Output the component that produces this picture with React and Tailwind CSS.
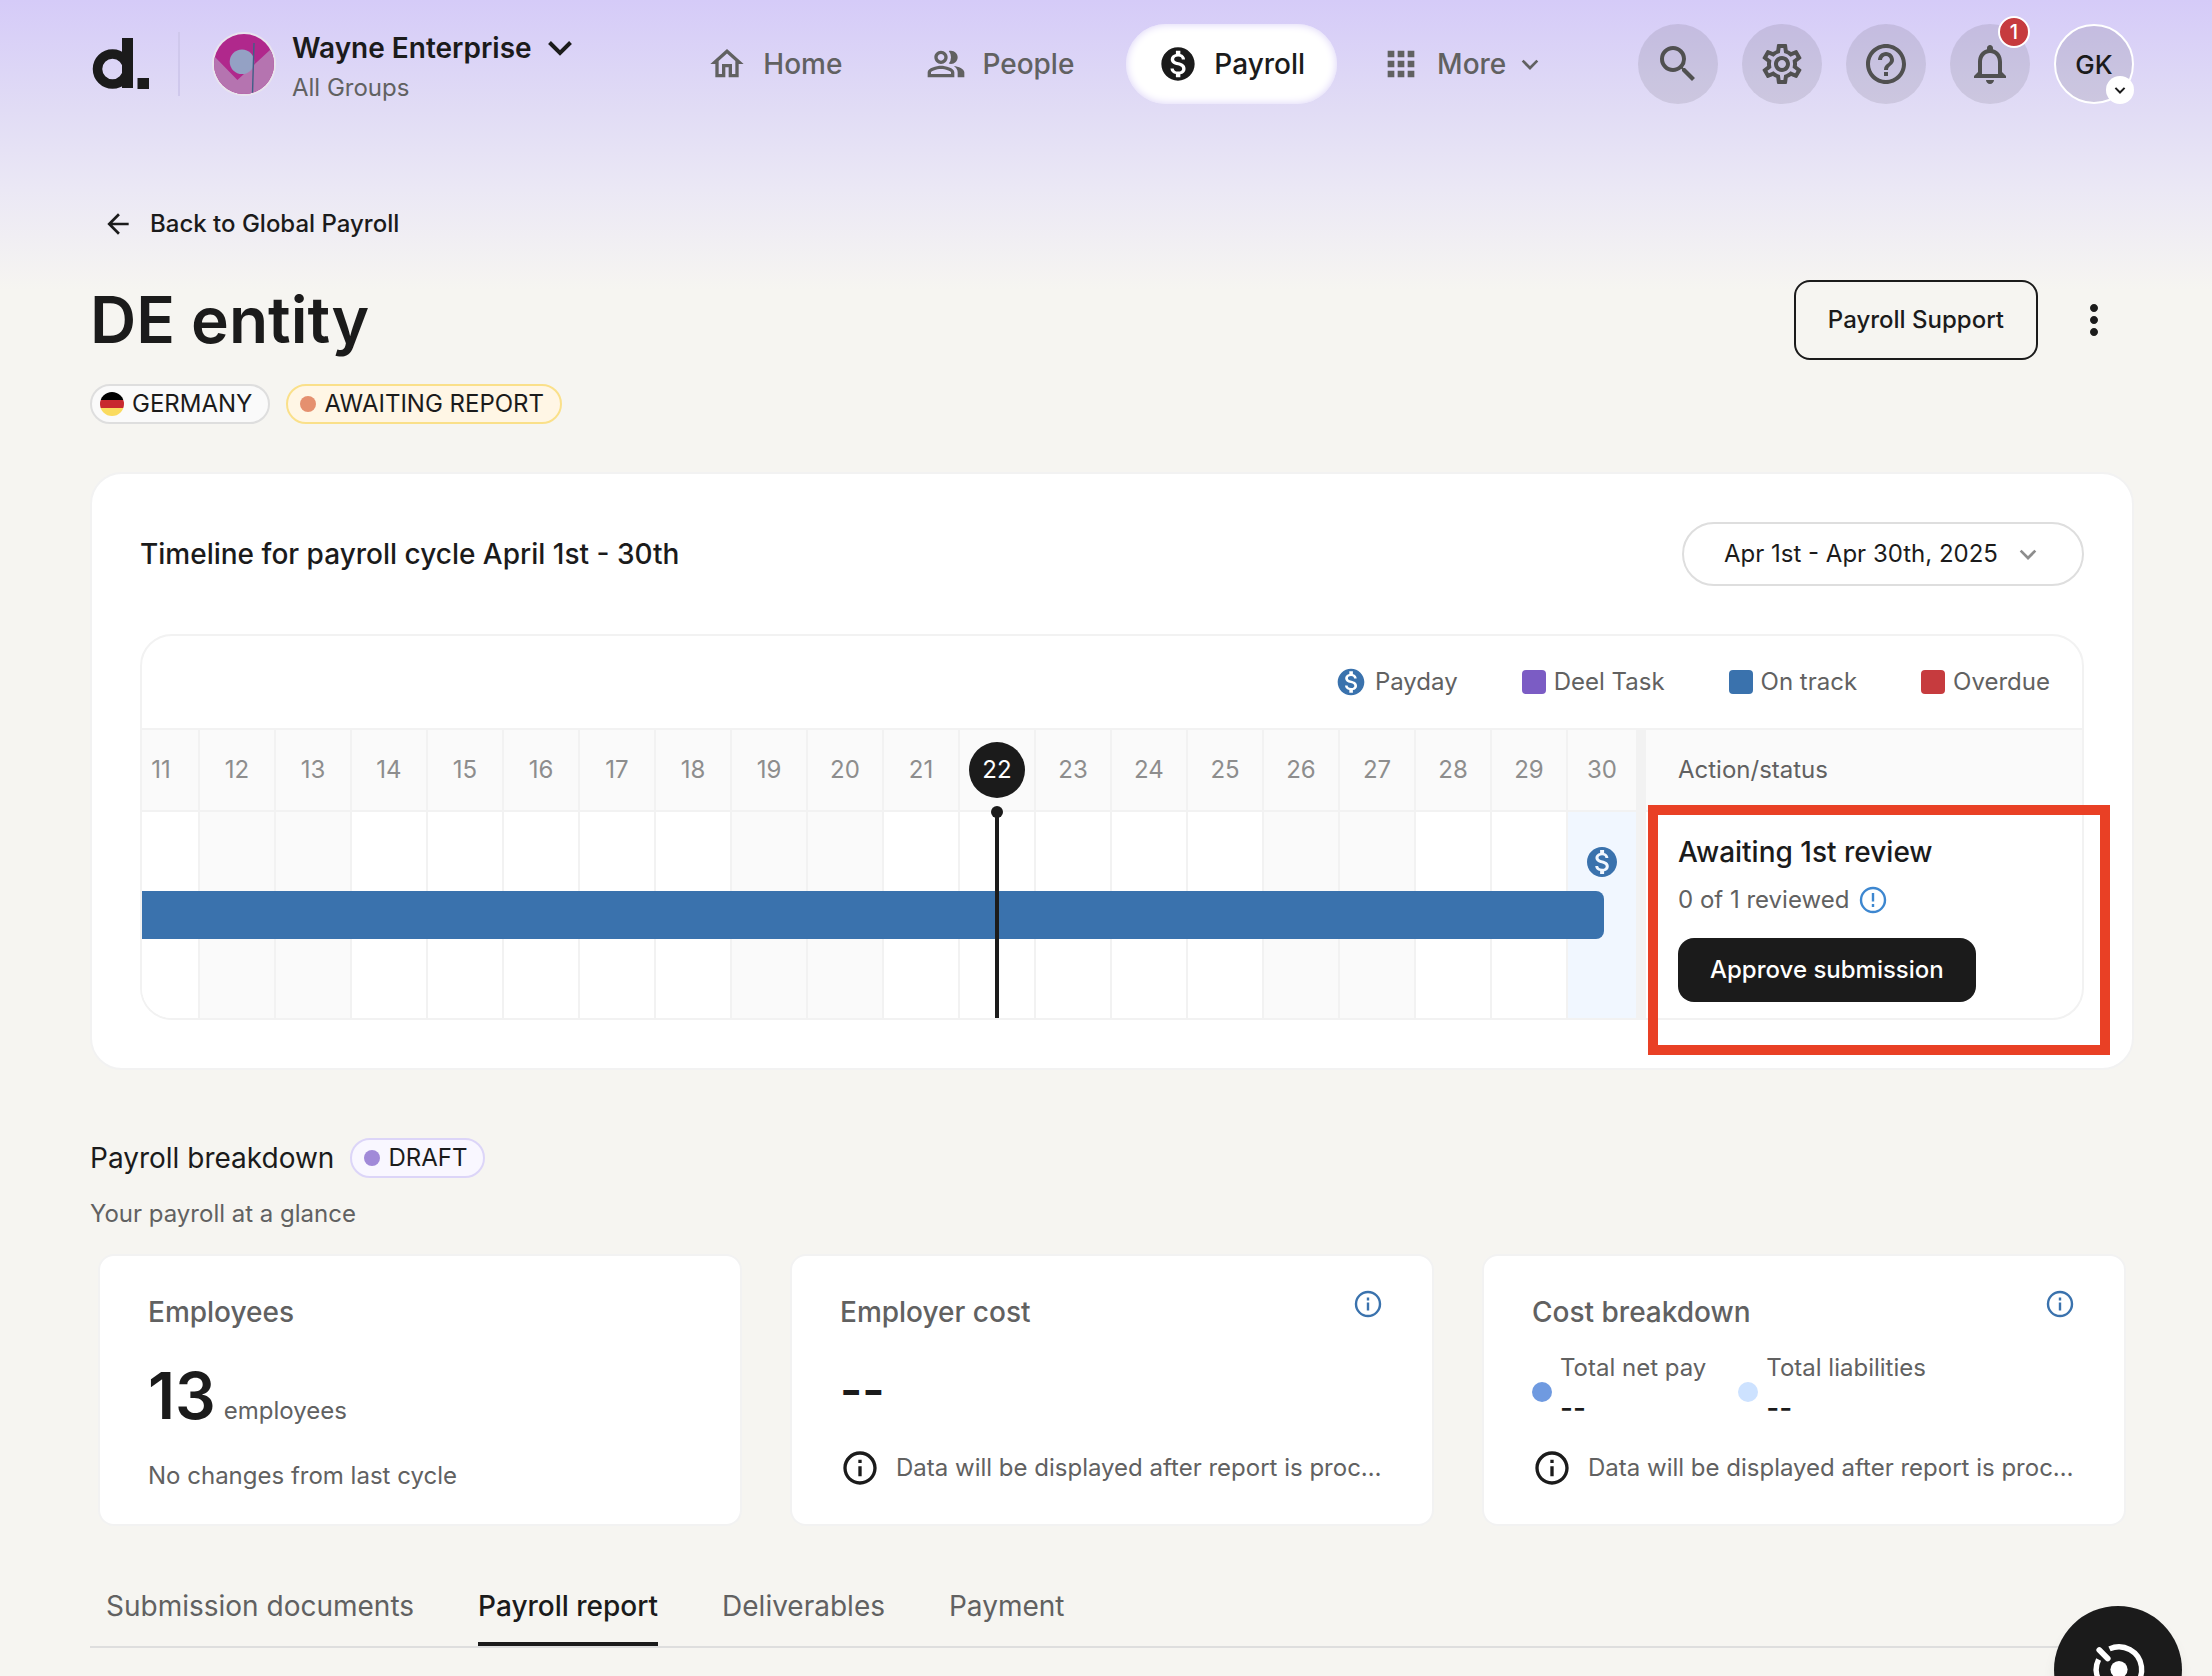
import React, { useState } from 'react';
import {
    MdOutlineHome,
    MdOutlinePeopleAlt,
    MdMonetizationOn,
    MdApps,
    MdSearch,
    MdOutlineSettings,
    MdHelpOutline,
    MdNotificationsNone,
    MdArrowBack,
    MdMoreVert,
    MdInfoOutline,
} from 'react-icons/md';

const NAV_ITEMS = [
    { label: 'Home', icon: MdOutlineHome },
    { label: 'People', icon: MdOutlinePeopleAlt },
    { label: 'Payroll', icon: MdMonetizationOn, active: true },
    { label: 'More', icon: MdApps, hasMenu: true },
];

const DAYS = [11, 12, 13, 14, 15, 16, 17, 18, 19, 20, 21, 22, 23, 24, 25, 26, 27, 28, 29, 30];
const WEEKENDS = [12, 13, 19, 20, 26, 27];
const TODAY = 22;
const PAYDAY = 30;

const TABS = ['Submission documents', 'Payroll report', 'Deliverables', 'Payment'];

const PENDING_NOTE = 'Data will be displayed after report is proc…';

function Chevron({ className, strokeWidth = 2 }) {
    return (
        <svg viewBox="0 0 24 24" className={className} fill="none" stroke="currentColor" strokeWidth={strokeWidth}>
            <path d="M6.5 9.5 12 15l5.5-5.5" />
        </svg>
    );
}

function Logo() {
    return (
        <svg viewBox="0 0 58 52" className="h-[52px] w-[58px]" fill="#1b1b1b" aria-hidden="true">
            <circle cx="20.5" cy="31" r="15" fill="none" stroke="#1b1b1b" strokeWidth="9.5" />
            <rect x="30" y="0" width="11" height="50" />
            <rect x="45.5" y="40" width="11.5" height="11" />
        </svg>
    );
}

function OrgAvatar() {
    return (
        <svg viewBox="0 0 64 64" className="h-16 w-16 shrink-0" aria-hidden="true">
            <defs>
                <clipPath id="org-avatar">
                    <circle cx="32" cy="32" r="30" />
                </clipPath>
            </defs>
            <circle cx="32" cy="32" r="32" fill="#e8e4ee" />
            <g clipPath="url(#org-avatar)">
                <rect width="64" height="64" fill="#b0288c" />
                <path d="M0 22 25.4 48 58 18 64 26V64H0Z" fill="#b574b0" />
                <circle cx="30" cy="29.7" r="12.3" fill="#94a1c4" />
                <path d="M42 11 40.5 61" stroke="#3f5f86" strokeWidth="1.4" />
            </g>
        </svg>
    );
}

function InfoIcon() {
    return (
        <svg viewBox="0 0 32 32" className="h-8 w-8 text-[#3a72ad]" fill="none" stroke="currentColor" strokeWidth="2.4">
            <circle cx="16" cy="16" r="12" />
            <path d="M16 14.5v8M16 9.5v3" />
        </svg>
    );
}

function AlertIcon() {
    return (
        <svg viewBox="0 0 32 32" className="h-8 w-8 text-[#3d87d0]" fill="none" stroke="currentColor" strokeWidth="2.4">
            <circle cx="16" cy="16" r="12" />
            <path d="M16 9v8.5M16 20v3" />
        </svg>
    );
}

function IconButton({ label, icon: Icon, badge }) {
    return (
        <button
            type="button"
            aria-label={label}
            className="relative flex h-20 w-20 items-center justify-center rounded-full bg-[#1b1b1b]/10 text-[#505050]"
        >
            <Icon className="h-12 w-12" />
            {badge && (
                <span className="absolute -top-2 right-0 flex h-8 w-8 items-center justify-center rounded-full border-2 border-white bg-[#c63b3e] text-xl font-medium text-white">
                    {badge}
                </span>
            )}
        </button>
    );
}

function Header() {
    return (
        <header className="flex items-center justify-between pt-6 pl-0.5">
            <div className="flex h-20 items-center">
                <a href="#home" aria-label="Deel">
                    <Logo />
                </a>
                <div className="ml-7 h-16 w-0.5 bg-[#cfc8ec]" />
                <button type="button" className="ml-8 flex items-center gap-4 pr-7 text-left">
                    <OrgAvatar />
                    <span className="block pt-2">
                        <span className="flex items-center gap-2 text-[28px] leading-10 font-semibold">
                            Wayne Enterprise
                            <svg
                                viewBox="0 0 24 24"
                                className="h-10 w-10"
                                fill="none"
                                stroke="currentColor"
                                strokeWidth="2.4"
                            >
                                <path d="M5.7 8.7 12 15l6.3-6.300" />
                            </svg>
                        </span>
                        <span className="block text-2xl leading-10 text-[#616161]">All Groups</span>
                    </span>
                </button>
            </div>

            <nav className="flex items-center gap-5">
                {NAV_ITEMS.map(({ label, icon: Icon, active, hasMenu }) => (
                    <a
                        key={label}
                        href={`#${label.toLowerCase()}`}
                        className={
                            active
                                ? 'flex h-20 items-center gap-4 rounded-full bg-white px-8 text-[28px] font-medium shadow-[inset_0_0_8px_#d9d0f7]'
                                : hasMenu
                                  ? 'flex h-20 items-center gap-4 px-6 text-[28px] font-medium text-[#616161]'
                                  : 'flex h-20 items-center gap-4 px-8 text-[28px] font-medium text-[#616161]'
                        }
                    >
                        <Icon className="h-10 w-10" />
                        <span className="flex items-center gap-2">
                            {label}
                            {hasMenu && <Chevron className="h-8 w-8" />}
                        </span>
                    </a>
                ))}
            </nav>

            <div className="flex items-center gap-6">
                <IconButton label="Search" icon={MdSearch} />
                <IconButton label="Settings" icon={MdOutlineSettings} />
                <IconButton label="Help" icon={MdHelpOutline} />
                <IconButton label="Notifications" icon={MdNotificationsNone} badge="1" />
                <button
                    type="button"
                    className="relative flex h-20 w-20 items-center justify-center rounded-full border-2 border-white bg-[#1b1b1b]/10 text-[26px] font-medium"
                >
                    GK
                    <span className="absolute -right-0.5 -bottom-0.5 flex h-7 w-7 items-center justify-center rounded-full bg-white">
                        <Chevron className="h-5 w-5" strokeWidth={2.4} />
                    </span>
                </button>
            </div>
        </header>
    );
}

function Legend() {
    return (
        <ul className="flex h-[92px] items-center justify-end gap-16 px-8 text-2xl text-[#616161]">
            <li className="flex items-center gap-2">
                <MdMonetizationOn className="h-8 w-8 text-[#3a72ad]" />
                Payday
            </li>
            <li className="flex items-center gap-2">
                <span className="h-6 w-6 rounded bg-[#7b5cc4]" />
                Deel Task
            </li>
            <li className="flex items-center gap-2">
                <span className="h-6 w-6 rounded bg-[#3a72ad]" />
                On track
            </li>
            <li className="flex items-center gap-2">
                <span className="h-6 w-6 rounded bg-[#c63b3e]" />
                Overdue
            </li>
        </ul>
    );
}

function Timeline() {
    const dayWidth = (day) => (day === PAYDAY ? 'w-[68px]' : 'w-[76px] border-r-2');

    const dayBackground = (day) => {
        if (day === PAYDAY) return 'bg-[#f1f7ff]';
        return WEEKENDS.includes(day) ? 'bg-[#fafafa]' : 'bg-white';
    };

    return (
        <div className="mt-12 overflow-hidden rounded-[32px] border-2 border-[#f2f2f2]">
            <Legend />
            <div className="flex border-t-2 border-[#f2f2f2]">
                <div className="min-w-0 flex-1 overflow-hidden">
                    <div className="flex h-[82px] justify-end border-b-2 border-[#f2f2f2] bg-[#fafafa] text-2xl text-[#8d8d8d]">
                        {DAYS.map((day) => (
                            <div
                                key={day}
                                className={`flex shrink-0 items-center justify-center border-[#f2f2f2] ${dayWidth(day)}`}
                            >
                                {day === TODAY ? (
                                    <span className="flex h-14 w-14 items-center justify-center rounded-full bg-[#1b1b1b] text-white">
                                        {day}
                                    </span>
                                ) : (
                                    day
                                )}
                            </div>
                        ))}
                    </div>
                    <div className="relative flex h-[206px] justify-end">
                        {DAYS.map((day) => (
                            <div
                                key={day}
                                className={`relative shrink-0 border-[#f2f2f2] ${dayWidth(day)} ${dayBackground(day)}`}
                            >
                                {day === PAYDAY && (
                                    <MdMonetizationOn className="mx-auto mt-8 h-9 w-9 text-[#3a72ad]" />
                                )}
                                {day === TODAY && (
                                    <span className="absolute inset-y-0 left-1/2 z-10 w-1 -translate-x-1/2 bg-[#1b1b1b]">
                                        <span className="absolute -top-1.5 -left-1 h-3 w-3 rounded-full bg-[#1b1b1b]" />
                                    </span>
                                )}
                            </div>
                        ))}
                        <div className="absolute inset-y-0 right-8 left-0 my-auto h-12 rounded-r-lg bg-[#3a72ad]" />
                    </div>
                </div>

                <div className="w-2.5 bg-[#f2f2f2]" />

                <div className="w-[436px]">
                    <div className="flex h-[82px] items-center border-b-2 border-[#f2f2f2] bg-[#fafafa] px-8 text-2xl text-[#616161]">
                        Action/status
                    </div>
                    <div className="px-8 pt-5">
                        <h3 className="text-[28px] leading-10 font-medium">Awaiting 1st review</h3>
                        <div className="mt-2.5 flex items-center gap-2 text-2xl leading-9 text-[#616161]">
                            0 of 1 reviewed
                            <AlertIcon />
                        </div>
                        <button
                            type="button"
                            className="mt-5 h-16 rounded-2xl bg-[#1b1b1b] px-8 text-2xl font-medium text-white"
                        >
                            Approve submission
                        </button>
                    </div>
                </div>
            </div>
        </div>
    );
}

function Pill({ children, className }) {
    return (
        <span className={`flex h-10 items-center rounded-full border-2 text-2xl ${className}`}>{children}</span>
    );
}

function SummaryCard({ title, info, note, children }) {
    return (
        <section className="min-w-0 flex-1 rounded-2xl border-2 border-[#f2f2f2] bg-white px-12 py-8">
            <div className="flex items-start justify-between">
                <h3 className="pt-1 text-[28px] leading-10 font-medium text-[#616161]">{title}</h3>
                {info && (
                    <button type="button" aria-label={`About ${title}`}>
                        <InfoIcon />
                    </button>
                )}
            </div>
            {children}
            {note && (
                <div className="flex items-center gap-4">
                    <MdInfoOutline className="h-10 w-10 shrink-0" />
                    <p className="truncate text-2xl text-[#616161]">{note}</p>
                </div>
            )}
        </section>
    );
}

function CostItem({ label, dot }) {
    return (
        <div className="flex items-center gap-2">
            <span className={`h-5 w-5 rounded-full ${dot}`} />
            <div>
                <p className="text-2xl leading-8 text-[#616161]">{label}</p>
                <p className="text-[28px] leading-[48px] font-medium">--</p>
            </div>
        </div>
    );
}

export default function App() {
    const [cycle, setCycle] = useState('2025-04');
    const [activeTab, setActiveTab] = useState('Payroll report');

    return (
        <div className="min-h-screen overflow-hidden bg-[#f6f5f1] bg-[linear-gradient(180deg,#d5cbf8_0px,#e1dcf5_110px,#ebe8f5_190px,#f6f5f1_290px)] pr-[78px] pl-[90px] font-['Inter',sans-serif] text-[#1b1b1b]">
            <Header />

            <main>
                <a href="#payroll" className="mt-[104px] ml-3 flex items-center gap-4 text-2xl leading-8 font-medium">
                    <MdArrowBack className="h-8 w-8" />
                    Back to Global Payroll
                </a>

                <div className="mt-10 flex h-20 items-center justify-between">
                    <h1 className="text-[64px] leading-[80px] font-semibold">DE entity</h1>
                    <div className="flex items-center gap-4">
                        <button
                            type="button"
                            className="h-20 rounded-2xl border-2 border-[#1b1b1b] px-8 text-2xl font-medium"
                        >
                            Payroll Support
                        </button>
                        <button
                            type="button"
                            aria-label="More actions"
                            className="flex h-20 w-20 items-center justify-center"
                        >
                            <MdMoreVert className="h-12 w-12" />
                        </button>
                    </div>
                </div>

                <div className="mt-6 flex gap-4">
                    <Pill className="gap-2 border-[#dedede] bg-[#fafafa] pr-4 pl-2">
                        <span className="flex h-6 w-6 flex-col overflow-hidden rounded-full">
                            <span className="flex-1 bg-black" />
                            <span className="flex-1 bg-[#c8292f]" />
                            <span className="flex-1 bg-[#fadb5f]" />
                        </span>
                        GERMANY
                    </Pill>
                    <Pill className="gap-2 border-[#fae08a] bg-[#fff6e5] pr-4 pl-3">
                        <span className="h-4 w-4 rounded-full bg-[#e5906f]" />
                        AWAITING REPORT
                    </Pill>
                </div>

                <section className="mt-12 rounded-[32px] border-2 border-[#f2f2f2] bg-white p-12">
                    <div className="flex items-center justify-between">
                        <h2 className="text-[28px] font-medium">Timeline for payroll cycle April 1st - 30th</h2>
                        <div className="relative">
                            <select
                                aria-label="Payroll cycle"
                                value={cycle}
                                onChange={(e) => setCycle(e.target.value)}
                                className="h-16 appearance-none rounded-full border-2 border-[#dedede] bg-white pr-[84px] pl-10 text-2xl"
                            >
                                <option value="2025-04">Apr 1st - Apr 30th, 2025</option>
                            </select>
                            <Chevron className="pointer-events-none absolute top-4 right-10 h-8 w-8 text-[#8d8d8d]" />
                        </div>
                    </div>

                    <div className="relative">
                        <Timeline />
                        {/* Highlight around the pending action */}
                        <div className="pointer-events-none absolute -right-[26px] -bottom-[35px] h-[250px] w-[462px] border-10 border-[#e94025]" />
                    </div>
                </section>

                <div className="mt-[68px] flex items-center gap-4">
                    <h2 className="text-[28px] leading-10">Payroll breakdown</h2>
                    <Pill className="gap-2 border-[#dcd5f8] bg-[#f9f7ff] pr-4 pl-3">
                        <span className="h-4 w-4 rounded-full bg-[#a18ad8]" />
                        DRAFT
                    </Pill>
                </div>
                <p className="mt-5 text-2xl leading-8 text-[#616161]">Your payroll at a glance</p>

                <div className="mt-6 flex gap-12 px-2">
                    <SummaryCard title="Employees">
                        <p className="mt-6 flex h-20 items-baseline gap-2 text-2xl text-[#616161]">
                            <span className="text-[64px] leading-[80px] font-semibold text-[#1b1b1b]">13</span>
                            employees
                        </p>
                        <p className="mt-6 text-2xl leading-8 text-[#616161]">No changes from last cycle</p>
                    </SummaryCard>
                    <SummaryCard title="Employer cost" info note={PENDING_NOTE}>
                        <div className="flex h-[116px] items-center">
                            <p className="text-5xl font-semibold">--</p>
                        </div>
                    </SummaryCard>
                    <SummaryCard title="Cost breakdown" info note={PENDING_NOTE}>
                        <div className="flex h-[116px] items-center gap-8 pt-1">
                            <CostItem label="Total net pay" dot="bg-[#6f9ae0]" />
                            <CostItem label="Total liabilities" dot="bg-[#cde2ff]" />
                        </div>
                    </SummaryCard>
                </div>

                <div role="tablist" className="mt-[60px] flex gap-16 border-b-2 border-[#dedede] pl-4">
                    {TABS.map((tab) => (
                        <button
                            key={tab}
                            type="button"
                            role="tab"
                            aria-selected={tab === activeTab}
                            onClick={() => setActiveTab(tab)}
                            className={
                                tab === activeTab
                                    ? 'border-b-4 border-[#1b1b1b] pb-4 text-[28px] leading-10 font-medium'
                                    : 'border-b-4 border-transparent pb-4 text-[28px] leading-10 text-[#616161]'
                            }
                        >
                            {tab}
                        </button>
                    ))}
                </div>
            </main>

            <button
                type="button"
                aria-label="Open assistant"
                className="fixed right-[30px] -bottom-[58px] flex h-32 w-32 items-center justify-center rounded-full bg-[#1b1b1b] text-white shadow-lg"
            >
                <svg viewBox="0 0 64 64" className="h-16 w-16" fill="none" stroke="currentColor" strokeWidth="5.4">
                    <path d="M23.5 10.9A22.700 22.700 0 1 1 12.600 21.500" />
                    <path d="M13.300 12 21.700 20.500" strokeWidth="5.800" strokeLinecap="round" />
                    <circle cx="33" cy="31.500" r="8.600" fill="currentColor" stroke="none" />
                </svg>
            </button>
        </div>
    );
}
